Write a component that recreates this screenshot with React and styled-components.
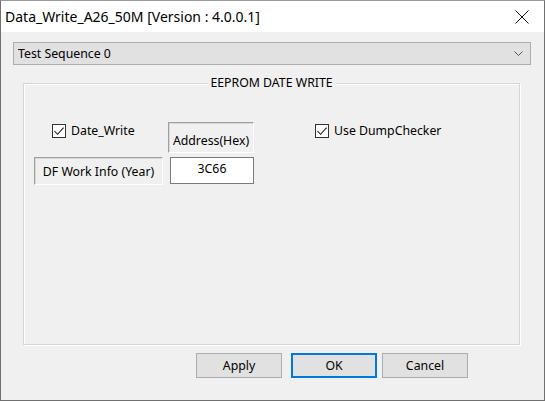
import React from "react";
import styled, { createGlobalStyle } from "styled-components";

const Global = createGlobalStyle`
  html, body { margin: 0; padding: 0; background: #f0f0f0; }
  body { font-family: "Noto Sans", "Segoe UI", sans-serif; font-size: 12.3px; color: #000; }
  * { box-sizing: border-box; }
`;

const Window = styled.div`
  width: 545px;
  height: 401px;
  border: 1px solid #707070;
  border-top-color: #9a9a9a;
  background: #f0f0f0;
  display: flex;
  flex-direction: column;
`;

const TitleBar = styled.div`
  height: 31px;
  background: #fff;
  display: flex;
  align-items: center;
  justify-content: space-between;
  padding-left: 4px;
`;

const TitleText = styled.span`
  font-family: "Noto Sans", "Segoe UI", sans-serif;
  font-size: 14px;
  color: #000;
  margin-top: -1px;
`;

const CloseBtn = styled.div`
  width: 44px;
  height: 31px;
  display: flex;
  align-items: center;
  justify-content: center;
`;

const Body = styled.div`
  flex: 1;
  display: flex;
  flex-direction: column;
  padding: 10px 12px 0 12px;
`;

const Combo = styled.div`
  height: 23px;
  width: 518px;
  background: #e1e1e1;
  border: 1px solid #adadad;
  display: flex;
  align-items: center;
  justify-content: space-between;
  padding: 0 7px 0 4px;
`;

const Group = styled.div`
  position: relative;
  margin: 18px 0 0 10px;
  width: 497px;
  height: 262px;
  border: 1px solid #d5d5d5;
  box-shadow: inset 1px 1px 0 #fff, 1px 1px 0 #fff;
  padding: 38px 0 0 10px;
`;

const GroupTitle = styled.span`
  position: absolute;
  top: -9px;
  left: 50%;
  transform: translateX(-50%);
  background: #f0f0f0;
  padding: 0 3px;
  line-height: 16px;
  white-space: nowrap;
`;

const Grid = styled.div`
  display: grid;
  grid-template-columns: 129px 86px auto;
  grid-template-rows: 31px 28px;
  column-gap: 5px;
  row-gap: 4px;
  align-items: start;
`;

const CheckRow = styled.label`
  display: flex;
  align-items: center;
  gap: 5px;
  margin: ${(p) => p.$m || "0"};
  line-height: 16px;
  white-space: nowrap;
`;

const Box = styled.span`
  width: 14px;
  height: 14px;
  border: 1px solid #333;
  background: #fff;
  display: flex;
  align-items: center;
  justify-content: center;
`;

const Sunken = styled.div`
  height: ${(p) => p.$h}px;
  border: 1px solid;
  border-color: #a0a0a0 #fff #fff #a0a0a0;
  box-shadow: inset 1px 1px 0 #d8d8d8;
  display: flex;
  align-items: ${(p) => p.$align || "center"};
  justify-content: center;
  padding-top: ${(p) => p.$pt || 0}px;
  white-space: nowrap;
`;

const TextBox = styled.div`
  width: 84px;
  height: 27px;
  margin-left: 2px;
  background: #fff;
  border: 1px solid #7a7a7a;
  text-align: center;
  padding-top: 3px;
  line-height: 16px;
`;

const Buttons = styled.div`
  display: flex;
  margin: 8px 0 0 183px;
`;

const Button = styled.button`
  width: 86px;
  height: 25px;
  margin-right: ${(p) => p.$mr || 0}px;
  background: #e1e1e1;
  border: ${(p) => (p.$def ? "2px solid #0078d7" : "1px solid #adadad")};
  font-family: inherit;
  font-size: 12.3px;
  color: #000;
  padding: 0;
`;

const Check = () => (
  <svg width="12" height="12" viewBox="0 0 12 12">
    <path d="M1.5 6.2 L4.6 9.3 L10.6 2.6" fill="none" stroke="#222" strokeWidth="1.1" />
  </svg>
);

export default function App() {
  return (
    <>
      <Global />
      <Window>
        <TitleBar>
          <TitleText>Data_Write_A26_50M [Version : 4.0.0.1]</TitleText>
          <CloseBtn>
            <svg width="14" height="14" viewBox="0 0 14 14">
              <path d="M0.5 0.5 L13.5 13.5 M13.5 0.5 L0.5 13.5" stroke="#111" strokeWidth="1" />
            </svg>
          </CloseBtn>
        </TitleBar>
        <Body>
          <Combo>
            <span>Test Sequence 0</span>
            <svg width="9" height="5" viewBox="0 0 9 5">
              <path d="M0.5 0.5 L4.5 4.5 L8.5 0.5" fill="none" stroke="#555" strokeWidth="1" />
            </svg>
          </Combo>
          <Group>
            <GroupTitle>EEPROM DATE WRITE</GroupTitle>
            <Grid>
              <CheckRow $m="1px 0 0 18px">
                <Box><Check /></Box>
                Date_Write
              </CheckRow>
              <Sunken $h={31} $align="flex-start" $pt={9}>Address(Hex)</Sunken>
              <CheckRow $m="1px 0 0 56px">
                <Box><Check /></Box>
                Use DumpChecker
              </CheckRow>
              <Sunken $h={28}>DF Work Info (Year)</Sunken>
              <TextBox>3C66</TextBox>
            </Grid>
          </Group>
          <Buttons>
            <Button $mr={9}>Apply</Button>
            <Button $mr={5} $def>OK</Button>
            <Button>Cancel</Button>
          </Buttons>
        </Body>
      </Window>
    </>
  );
}
